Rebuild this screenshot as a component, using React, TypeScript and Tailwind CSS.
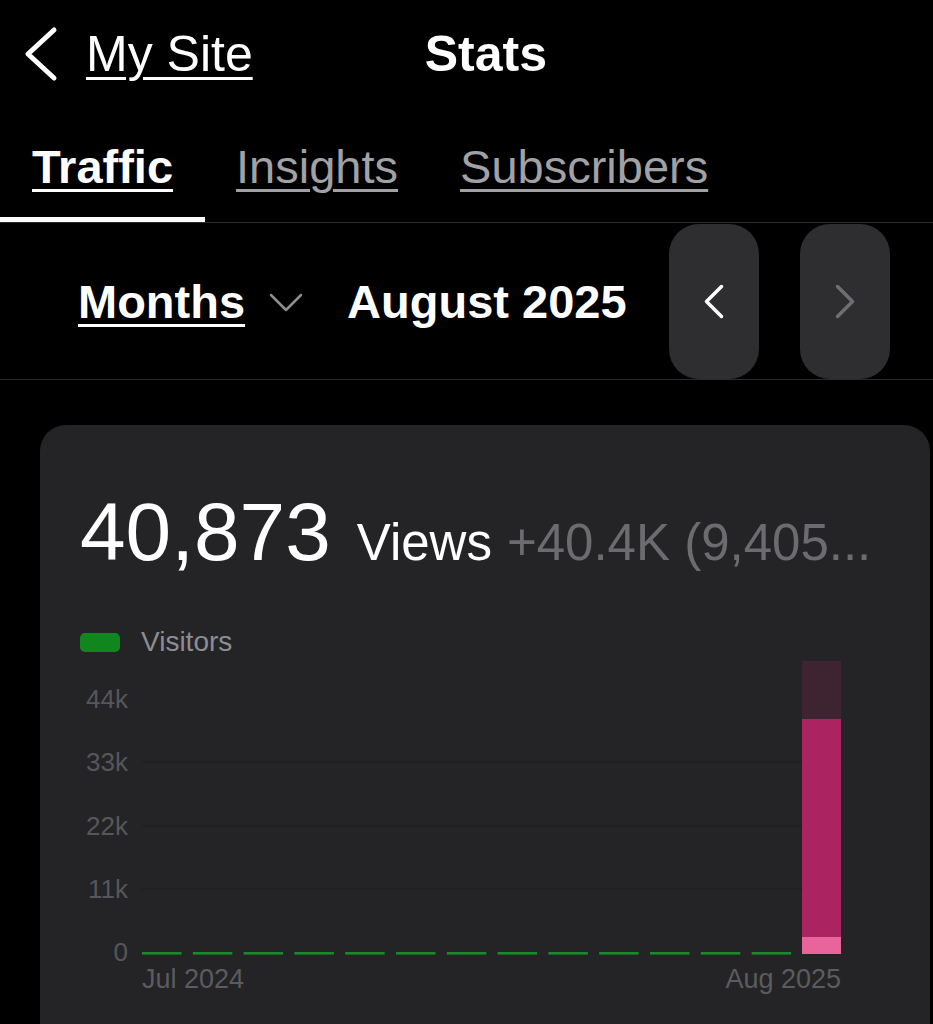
import React from "react";

/* =====================
   Data
===================== */

const yLabels = ["44k", "33k", "22k", "11k", "0"];
const gridLines = [106, 170, 233];
const emptyMonths = Array.from({ length: 13 }, (_, i) => i);
const SLOT = 50.8;

/* =====================
   Icons
===================== */

const ChevronLeft: React.FC<{ w: number; h: number; stroke: number; color: string }> = ({
    w,
    h,
    stroke,
    color,
}) => (
    <svg width={w} height={h} viewBox={`0 0 ${w} ${h}`} fill="none">
        <polyline
            points={`${w - stroke},${stroke} ${stroke},${h / 2} ${w - stroke},${h - stroke}`}
            stroke={color}
            strokeWidth={stroke}
            strokeLinecap="round"
            strokeLinejoin="round"
        />
    </svg>
);

const ChevronRight: React.FC<{ w: number; h: number; stroke: number; color: string }> = ({
    w,
    h,
    stroke,
    color,
}) => (
    <svg width={w} height={h} viewBox={`0 0 ${w} ${h}`} fill="none">
        <polyline
            points={`${stroke},${stroke} ${w - stroke},${h / 2} ${stroke},${h - stroke}`}
            stroke={color}
            strokeWidth={stroke}
            strokeLinecap="round"
            strokeLinejoin="round"
        />
    </svg>
);

const ChevronDown: React.FC = () => (
    <svg width="34" height="20" viewBox="0 0 34 20" fill="none">
        <polyline
            points="2,2 17,17 32,2"
            stroke="#8e8e93"
            strokeWidth="2.5"
            strokeLinecap="round"
            strokeLinejoin="round"
        />
    </svg>
);

/* =====================
   Chart
===================== */

const TrafficChart: React.FC = () => (
    <div>
        {/* Legend */}
        <div className="mt-[55px] flex items-center h-[28px]">
            <div className="w-[40px] h-[19px] rounded-[5px] bg-[#11861f]" />
            <span className="ml-[21px] text-[28px] leading-[28px] text-[#8d8d92]">Visitors</span>
        </div>

        <div className="flex items-start">
            {/* Y axis */}
            <div className="w-[48px] h-[279px] mt-[30px] flex flex-col justify-between items-end text-[26px] leading-[26px] text-[#56565b]">
                {yLabels.map((label) => (
                    <span key={label}>{label}</span>
                ))}
            </div>

            {/* Plot */}
            <div className="ml-[14px]">
                <svg width="700" height="300" viewBox="0 0 700 300">
                    {gridLines.map((y) => (
                        <line key={y} x1="0" x2="700" y1={y} y2={y} stroke="#1f1f21" strokeWidth="1.5" />
                    ))}
                    {emptyMonths.map((i) => (
                        <rect
                            key={i}
                            x={i * SLOT}
                            y="296"
                            width="39.5"
                            height="2.6"
                            fill="#188a2b"
                        />
                    ))}
                    <rect x="660" y="5" width="39" height="58" fill="#3e2331" />
                    <rect x="660" y="63" width="39" height="218" fill="#ab2461" />
                    <rect x="660" y="281" width="39" height="17" fill="#e8649b" />
                </svg>
                <div className="mt-[10px] w-[699px] flex justify-between text-[27px] leading-[27px] text-[#5b5b60]">
                    <span>Jul 2024</span>
                    <span>Aug 2025</span>
                </div>
            </div>
        </div>
    </div>
);

/* =====================
   Page
===================== */

export default function App() {
    return (
        <div
            className="w-[933px] h-[1024px] overflow-hidden bg-black text-white"
            style={{ fontFamily: '"Liberation Sans", Arial, sans-serif' }}
        >
            {/* Nav bar */}
            <div className="h-[107px] flex items-center pl-[23px]">
                <ChevronLeft w={36} h={58} stroke={5} color="#ffffff" />
                <span className="ml-[27px] text-[50px] leading-[50px] underline decoration-[3px] underline-offset-[6px]">
                    My Site
                </span>
                <span className="ml-[172px] text-[50px] leading-[50px] font-bold">Stats</span>
            </div>

            {/* Tabs */}
            <div className="pt-[36px] flex border-b border-[#2b2b2d]">
                <div className="flex flex-col">
                    <span className="px-[32px] text-[47px] leading-[47px] font-bold underline decoration-[3px] underline-offset-[6px]">
                        Traffic
                    </span>
                    <div className="mt-[27px] h-[5px] bg-white" />
                </div>
                <div className="flex flex-col">
                    <span className="px-[31px] text-[47px] leading-[47px] text-[#a1a1a6] underline decoration-[3px] underline-offset-[6px]">
                        Insights
                    </span>
                </div>
                <div className="flex flex-col">
                    <span className="px-[31px] text-[47px] leading-[47px] text-[#a1a1a6] underline decoration-[3px] underline-offset-[6px]">
                        Subscribers
                    </span>
                </div>
            </div>

            {/* Period selector */}
            <div className="h-[157px] flex items-center pl-[78px] pr-[43px] border-b border-[#2b2b2d]">
                <span className="text-[47px] leading-[47px] font-bold underline decoration-[3px] underline-offset-[6px]">
                    Months
                </span>
                <div className="ml-[24px] mt-[4px]">
                    <ChevronDown />
                </div>
                <span className="ml-[44px] text-[47px] leading-[47px] font-bold">August 2025</span>
                <div className="ml-auto flex gap-[41px]">
                    <button className="w-[90px] h-[155px] rounded-[30px] bg-[#2e2e30] flex items-center justify-center">
                        <ChevronLeft w={22} h={37} stroke={3.5} color="#ffffff" />
                    </button>
                    <button className="w-[90px] h-[155px] rounded-[30px] bg-[#2e2e30] flex items-center justify-center">
                        <ChevronRight w={22} h={37} stroke={3.5} color="#6e6e73" />
                    </button>
                </div>
            </div>

            {/* Card */}
            <div className="ml-[40px] mt-[45px] w-[890px] rounded-[26px] bg-[#242426] pl-[40px] pr-[40px] pt-[66px] pb-[60px]">
                <div className="flex items-baseline whitespace-nowrap">
                    <span className="text-[82px] leading-[82px]">40,873</span>
                    <span className="ml-[26px] text-[51px] leading-[51px]">Views</span>
                    <span className="ml-[15px] text-[51px] leading-[51px] text-[#6c6c70]">
                        +40.4K (9,405...
                    </span>
                </div>
                <TrafficChart />
            </div>
        </div>
    );
}
